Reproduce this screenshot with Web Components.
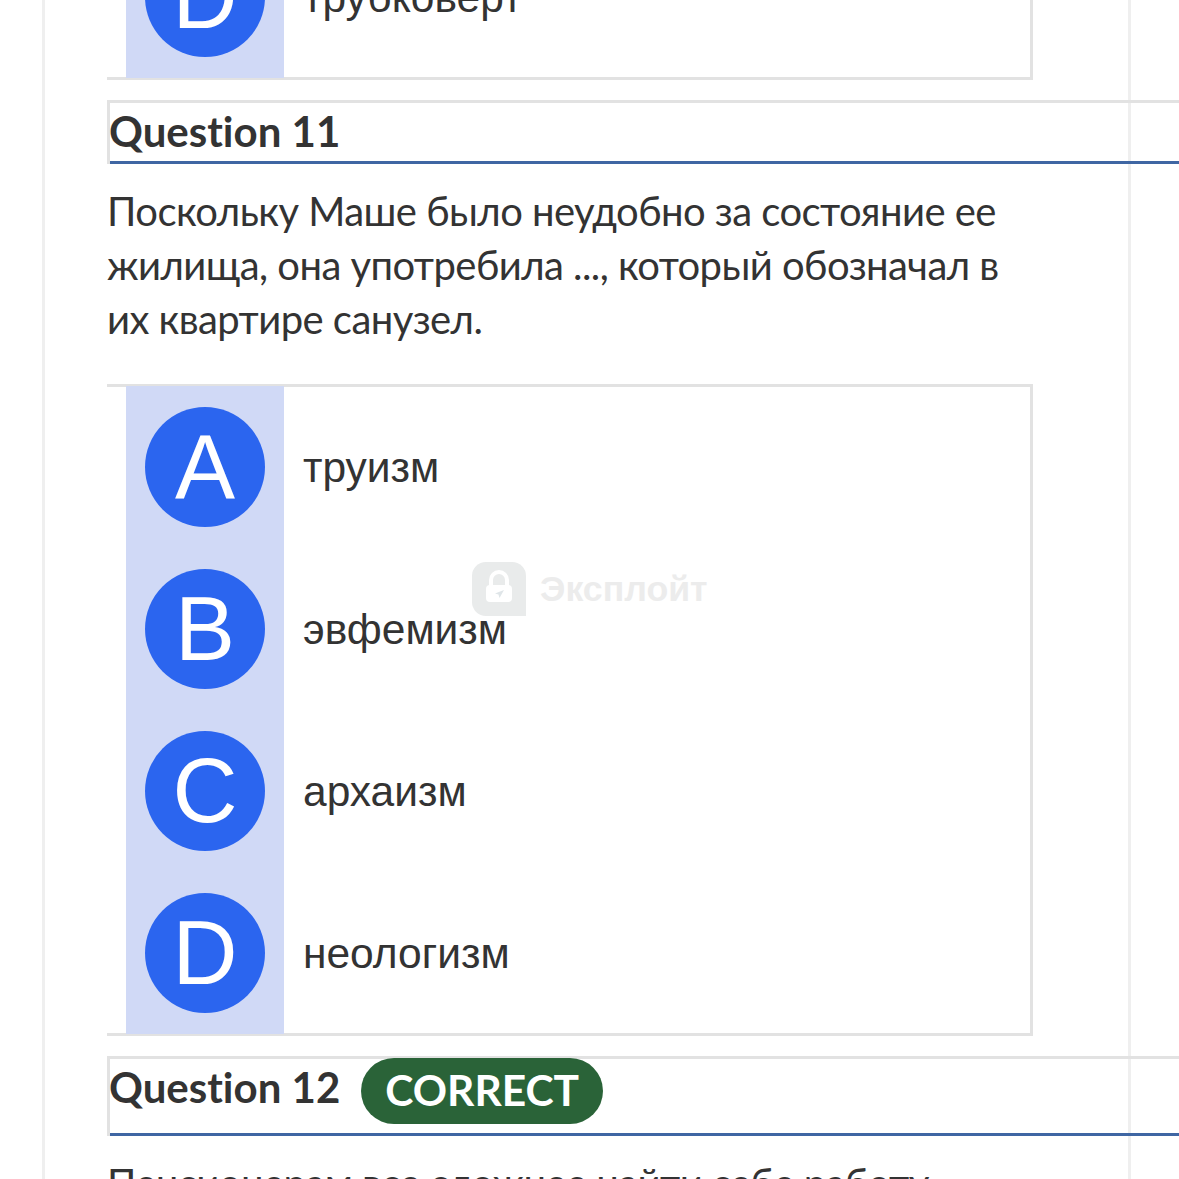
<!DOCTYPE html>
<html lang="ru">
<head>
<meta charset="utf-8">
<title>Quiz</title>
<style>
  html, body { margin: 0; height: 100%; overflow: hidden; background: #fff; }
</style>
</head>
<body>
<quiz-page>
  <quiz-options cut>
    <quiz-option letter="D">трубковерт</quiz-option>
  </quiz-options>
  <quiz-head>Question 11</quiz-head>
  <quiz-text>Поскольку Маше было неудобно за состояние ее жилища, она употребила ..., который обозначал в их квартире санузел.</quiz-text>
  <quiz-options>
    <quiz-option letter="A">труизм</quiz-option>
    <quiz-option letter="B">эвфемизм</quiz-option>
    <quiz-option letter="C">архаизм</quiz-option>
    <quiz-option letter="D">неологизм</quiz-option>
  </quiz-options>
  <quiz-head status="CORRECT">Question 12</quiz-head>
  <quiz-text>Пенсионерам все сложнее найти себе работу</quiz-text>
</quiz-page>
<quiz-watermark></quiz-watermark>

<script>
  // Small helper, every element gets an open shadow root with its own styles.
  const define = (name, html, setup) => {
    const template = document.createElement('template')
    template.innerHTML = html
    customElements.define(name, class extends HTMLElement {
      constructor() {
        super()
        this.attachShadow({ mode: 'open' }).appendChild(template.content.cloneNode(true))
      }

      connectedCallback() {
        if (setup) setup(this)
      }
    })
  }

  define('quiz-page', `
    <style>
      :host {
        display: block;
        box-sizing: border-box;
        width: 1089px;
        height: 1400px;
        margin: -84px 0 0 42px;
        padding-left: 62px;
        border-left: 3px solid #efefef;
        border-right: 3px solid #efefef;
      }
    </style>
    <slot></slot>
  `)

  define('quiz-options', `
    <style>
      :host {
        display: block;
        box-sizing: border-box;
        width: 926px;
        padding-left: 16px;
        border: 3px solid #e2e2e2;
        border-left: 0;
      }
      :host([cut]) { border-top: 0; }
      .list { display: flex; flex-direction: column; margin: -1px 0; padding-left: 3px; }
    </style>
    <div class="list"><slot></slot></div>
  `)

  define('quiz-option', `
    <style>
      :host { display: flex; align-items: center; height: 162px; }
      .col {
        flex: none;
        display: flex;
        align-items: center;
        justify-content: center;
        width: 158px;
        height: 100%;
        background: #d0d9f6;
      }
      .circle {
        display: flex;
        align-items: center;
        justify-content: center;
        width: 120px;
        height: 120px;
        border-radius: 50%;
        background: #2b65ef;
        color: #fff;
        font: 90px "Liberation Sans", Arial, sans-serif;
      }
      .label {
        margin-left: 19px;
        padding-top: 2px;
        color: #333;
        font: 42.5px "Liberation Sans", Arial, sans-serif;
      }
    </style>
    <div class="col"><div class="circle"></div></div>
    <div class="label"><slot></slot></div>
  `, (el) => {
    el.shadowRoot.querySelector('.circle').textContent = el.getAttribute('letter')
  })

  define('quiz-head', `
    <style>
      :host {
        display: block;
        box-sizing: border-box;
        width: 1100px;
        margin-top: 20px;
        border-top: 3px solid #e2e2e2;
        border-left: 3px solid #e2e2e2;
        color: #333;
        font: 700 42px Lato, sans-serif;
        font-variant-ligatures: none;
      }
      .row {
        display: flex;
        align-items: flex-start;
        border-bottom: 3px solid #3f66a3;
        line-height: 56px;
        min-height: 58px;
      }
      .title { margin-left: -1px; }
      .pill {
        display: none;
        margin: -1px 0 9px 21px;
        padding: 0 24px;
        height: 66px;
        line-height: 64px;
        border-radius: 33px;
        background: #2a6338;
        color: #fff;
        font-size: 42.5px;
      }
      :host([status]) .pill { display: block; }
    </style>
    <div class="row"><span class="title"><slot></slot></span><span class="pill"></span></div>
  `, (el) => {
    el.shadowRoot.querySelector('.pill').textContent = el.getAttribute('status')
  })

  define('quiz-text', `
    <style>
      :host {
        display: block;
        width: 900px;
        margin: 20px 0 38px;
        color: #333;
        font: 40px/54px Lato, "Liberation Sans", sans-serif;
        letter-spacing: -0.55px;
      }
    </style>
    <slot></slot>
  `)

  define('quiz-watermark', `
    <style>
      :host {
        position: absolute;
        left: 472px;
        top: 562px;
        display: flex;
        align-items: center;
        gap: 14px;
        color: #ececec;
        font: 700 35.7px "Liberation Sans", Arial, sans-serif;
      }
      svg { display: block; }
    </style>
    <svg width="54" height="54" viewBox="0 0 54 54">
      <path d="M14 0H40A14 14 0 0 1 54 14V54H14A14 14 0 0 1 0 40V14A14 14 0 0 1 14 0Z" fill="#e9ebeb"/>
      <path d="M19 24V18A8 8 0 0 1 35 18V24" fill="none" stroke="#fff" stroke-width="4"/>
      <rect x="14" y="23" width="26" height="17" rx="4" fill="#fff"/>
      <path d="M32 28L23 31.500L26.500 32.500L27.500 36Z" fill="#dfe5e8"/>
    </svg>
    <span>Эксплойт</span>
  `)
</script>
</body>
</html>
